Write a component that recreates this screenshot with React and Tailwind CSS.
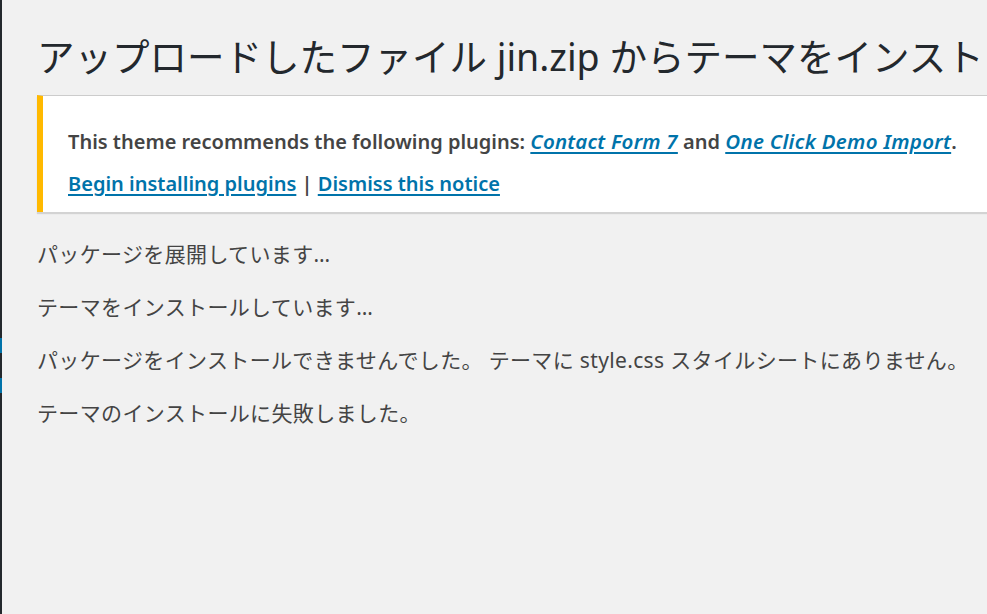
export default function App() {
  const jp = { fontFamily: '"Noto Sans", "Noto Sans CJK JP", sans-serif' };
  return (
    <div className="flex h-[614px] w-[987px] overflow-hidden bg-[#f1f1f1]" style={jp}>
      <div className="flex w-[2px] shrink-0 flex-col bg-[#23282d]">
        <div className="h-[338px]" />
        <div className="h-[15px] bg-[#0073aa]" />
        <div className="h-[25px]" />
        <div className="h-[15px] bg-[#0073aa]" />
      </div>
      <div className="min-w-0 flex-1 overflow-hidden pl-[35px]">
        <h1 className="mt-[33px] whitespace-nowrap text-[37.5px] leading-[48px] font-normal text-[#23282d]">
          アップロードしたファイル jin.zip からテーマをインスト
        </h1>
        <div className="mt-[14px] border-t border-l-[6px] border-t-[#cccccc] border-l-[#ffb900] bg-white pl-[25px] pt-[29px] pb-[12px] shadow-[0_2px_1px_rgba(0,0,0,0.12)] whitespace-nowrap">
          <p className="text-[20px] leading-[32px] font-semibold text-[#444]">
            This theme recommends the following plugins:{" "}
            <a className="text-[20.5px] italic tracking-[0.2px] text-[#0073aa] underline underline-offset-[3px]" href="#">Contact Form 7</a>{" "}
            and{" "}
            <a className="text-[20.5px] italic tracking-[0.3px] text-[#0073aa] underline underline-offset-[3px]" href="#">One Click Demo Import</a>.
          </p>
          <p className="mt-[10px] text-[20px] leading-[32px] font-semibold text-[#444]">
            <a className="text-[#0073aa] underline underline-offset-[3px]" href="#">Begin installing plugins</a>{" "}
            |{" "}
            <a className="text-[#0073aa] underline underline-offset-[3px]" href="#">Dismiss this notice</a>
          </p>
        </div>
        <div className="mt-[26px] flex flex-col gap-[21px] whitespace-nowrap text-[21px] leading-[32px] tracking-[0.35px] text-[#444]">
          <p>パッケージを展開しています&hellip;</p>
          <p>テーマをインストールしています&hellip;</p>
          <p>パッケージをインストールできませんでした。 テーマに style.css スタイルシートにありません。</p>
          <p>テーマのインストールに失敗しました。</p>
        </div>
      </div>
    </div>
  );
}
